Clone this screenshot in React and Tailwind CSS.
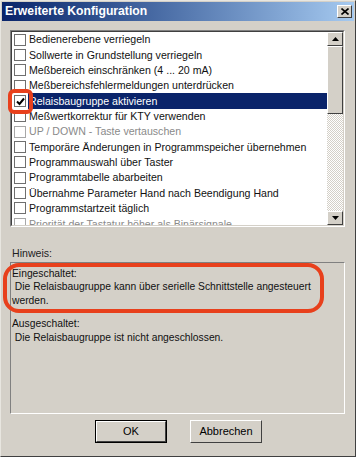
import React from 'react';

const items = [
  { label: 'Bedienerebene verriegeln' },
  { label: 'Sollwerte in Grundstellung verriegeln' },
  { label: 'Meßbereich einschränken (4 ... 20 mA)' },
  { label: 'Meßbereichsfehlermeldungen unterdrücken' },
  { label: 'Relaisbaugruppe aktivieren', checked: true, selected: true },
  { label: 'Meßwertkorrektur für KTY verwenden' },
  { label: 'UP / DOWN - Taste vertauschen', disabled: true },
  { label: 'Temporäre Änderungen in Programmspeicher übernehmen' },
  { label: 'Programmauswahl über Taster' },
  { label: 'Programmtabelle abarbeiten' },
  { label: 'Übernahme Parameter Hand nach Beendigung Hand' },
  { label: 'Programmstartzeit täglich' },
  { label: 'Priorität der Tastatur höher als Binärsignale', disabled: true },
];

function CheckBox({ checked, disabled }) {
  return (
    <div
      className={`w-[12px] h-[12px] shrink-0 border bg-white flex items-center justify-center ${
        disabled ? 'border-[#a8a8a8]' : 'border-[#6f6f6f]'
      }`}
    >
      {checked && (
        <svg width="9" height="9" viewBox="0 0 9 9">
          <path d="M1 4.5 L3.5 7 L8 1.5" stroke="#000" strokeWidth="2" fill="none" />
        </svg>
      )}
    </div>
  );
}

function Row({ item }) {
  return (
    <div className="h-[15.35px] flex items-center shrink-0">
      <div className="w-[16px] flex justify-center shrink-0">
        <CheckBox checked={item.checked} disabled={item.disabled} />
      </div>
      <div
        className={`flex-1 h-full flex items-center pl-[1px] whitespace-nowrap ${
          item.selected ? 'bg-[#0a246a] text-white' : item.disabled ? 'text-[#8a8a8a]' : 'text-[#111]'
        }`}
      >
        {item.label}
      </div>
    </div>
  );
}

function ScrollButton({ up }) {
  return (
    <div className="h-[14px] w-full bg-[#d4d0c8] border border-t-white border-l-white border-r-[#404040] border-b-[#404040] flex items-center justify-center shrink-0">
      <svg width="7" height="4" viewBox="0 0 7 4">
        {up ? <path d="M0 4 L3.5 0 L7 4 Z" fill="#000" /> : <path d="M0 0 L3.5 4 L7 0 Z" fill="#000" />}
      </svg>
    </div>
  );
}

export default function App() {
  return (
    <div
      className="w-[356px] h-[457px] bg-[#d4d0c8] border border-t-[#e8e6e0] border-l-[#e8e6e0] border-r-[#404040] border-b-[#404040] flex flex-col relative overflow-hidden"
      style={{ fontFamily: '"Liberation Sans", Arial, sans-serif' }}
    >
      {/* Title bar */}
      <div className="mx-[1px] mt-[1px] h-[19px] shrink-0 flex items-center justify-between pl-[3px] pr-[2px] bg-gradient-to-r from-[#0a246a] to-[#a6caf0]">
        <span className="text-white font-bold text-[12.2px]">Erweiterte Konfiguration</span>
        <div className="w-[15px] h-[13px] bg-[#d4d0c8] border border-t-white border-l-white border-r-[#404040] border-b-[#404040] flex items-center justify-center">
          <svg width="8" height="7" viewBox="0 0 8 7">
            <path d="M0.5 0.5 L7.5 6.5 M7.5 0.5 L0.5 6.5" stroke="#000" strokeWidth="1.6" />
          </svg>
        </div>
      </div>

      <div className="flex-1 flex flex-col pl-[9px] pr-[10px] pt-[9px] text-[10.6px] leading-none">
        {/* List box */}
        <div className="h-[197px] border border-t-[#808080] border-l-[#808080] border-r-white border-b-white shrink-0">
          <div className="h-full border border-t-[#404040] border-l-[#404040] border-r-[#d4d0c8] border-b-[#d4d0c8] bg-white flex">
            <div className="flex-1 flex flex-col overflow-hidden">
              {items.map((it) => (
                <Row key={it.label} item={it} />
              ))}
            </div>
            <div className="w-[16px] flex flex-col bg-[repeating-conic-gradient(#d4d0c8_0_25%,#ffffff_0_50%)] bg-[length:2px_2px]">
              <ScrollButton up />
              <div className="h-[68px] bg-[#d4d0c8] border border-t-white border-l-white border-r-[#404040] border-b-[#404040]" />
              <div className="flex-1" />
              <ScrollButton />
            </div>
          </div>
        </div>

        {/* Hinweis */}
        <div className="mt-[21px] pl-[2px] text-[#222]">Hinweis:</div>
        <div className="mt-[3px] h-[152px] border border-t-[#808080] border-l-[#808080] border-r-white border-b-white">
          <div className="h-full pl-[1px] pr-[2px] pt-[4px] leading-[13.6px] text-[10.3px] text-[#111]">
            <div>Eingeschaltet:</div>
            <div>&nbsp;Die Relaisbaugruppe kann über serielle Schnittstelle angesteuert</div>
            <div>werden.</div>
            <div className="mt-[10px]">Ausgeschaltet:</div>
            <div>&nbsp;Die Relaisbaugruppe ist nicht angeschlossen.</div>
          </div>
        </div>

        {/* Buttons */}
        <div className="mt-[6px] flex gap-[23px] pl-[85px] text-[11px]">
          <div className="w-[72px] h-[23px] border border-black">
            <div className="h-full border border-t-white border-l-white border-r-[#404040] border-b-[#404040] flex items-center justify-center">
              OK
            </div>
          </div>
          <div className="w-[72px] h-[23px] border border-t-white border-l-white border-r-[#404040] border-b-[#404040] flex items-center justify-center">
            Abbrechen
          </div>
        </div>
      </div>

      {/* red annotations */}
      <div className="absolute left-[7px] top-[88px] w-[25px] h-[25px] border-[4px] border-[#e8401c] rounded-[6px]" />
      <div className="absolute left-[2px] top-[262px] w-[321px] h-[50px] border-[4px] border-[#e8401c] rounded-[16px]" />
    </div>
  );
}
